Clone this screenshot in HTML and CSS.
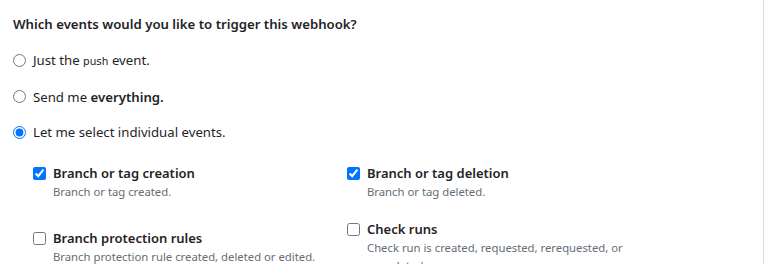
FILE: index.html
```html
<!DOCTYPE html>
<html>
<head>
<meta charset="utf-8">
<link rel="stylesheet" href="styles.css">
</head>
<body>
<div class="page">
  <h2 class="title">Which events would you like to trigger this webhook?</h2>
  <div class="radios">
    <label class="radio"><input type="radio" name="ev"><span>Just the <code>push</code> event.</span></label>
    <label class="radio"><input type="radio" name="ev"><span>Send me <strong>everything.</strong></span></label>
    <label class="radio"><input type="radio" name="ev" checked><span>Let me select individual events.</span></label>
  </div>
  <div class="events">
    <div class="event">
      <label class="check"><input type="checkbox" checked><span>Branch or tag creation</span></label>
      <p class="desc">Branch or tag created.</p>
    </div>
    <div class="event">
      <label class="check"><input type="checkbox" checked><span>Branch or tag deletion</span></label>
      <p class="desc">Branch or tag deleted.</p>
    </div>
    <div class="event">
      <label class="check"><input type="checkbox"><span>Branch protection rules</span></label>
      <p class="desc">Branch protection rule created, deleted or edited.</p>
    </div>
    <div class="event">
      <label class="check"><input type="checkbox"><span>Check runs</span></label>
      <p class="desc">Check run is created, requested, rerequested, or completed.</p>
    </div>
  </div>
</div>
</body>
</html>
```
FILE: styles.css
```css
html, body {
  margin: 0;
  padding: 0;
  background: #ffffff;
}

.page {
  width: 764px;
  height: 264px;
  box-sizing: border-box;
  border-right: 1px solid #d8d9e3;
  padding: 14px 0 0 13px;
  overflow: hidden;
  font-family: "Noto Sans", sans-serif;
  color: #1f2328;
  font-size: 13.2px;
}

.title {
  margin: 0;
  font-size: 13.2px;
  line-height: 20px;
  font-weight: 600;
}

.radios {
  display: flex;
  flex-direction: column;
  gap: 15.5px;
  margin-top: 16px;
}

.radio {
  display: flex;
  align-items: center;
  gap: 7px;
  line-height: 20px;
}

.radio input {
  margin: 0;
  width: 13px;
  height: 13px;
}

.radio code {
  font-family: "DejaVu Sans", sans-serif;
  font-size: 10.5px;
}

.radio strong {
  font-weight: 600;
}

.events {
  display: grid;
  grid-template-columns: 314px 314px;
  align-items: center;
  row-gap: 18px;
  margin-top: 21px;
  margin-left: 20px;
}

.check {
  display: flex;
  align-items: center;
  gap: 7px;
  font-weight: 600;
  font-size: 13px;
  line-height: 20px;
}

.check input {
  margin: 0;
  width: 13px;
  height: 13px;
}

.desc {
  margin: 0;
  padding-left: 20px;
  font-size: 11.3px;
  line-height: 18px;
  color: #656d76;
  max-width: 275px;
}
```
